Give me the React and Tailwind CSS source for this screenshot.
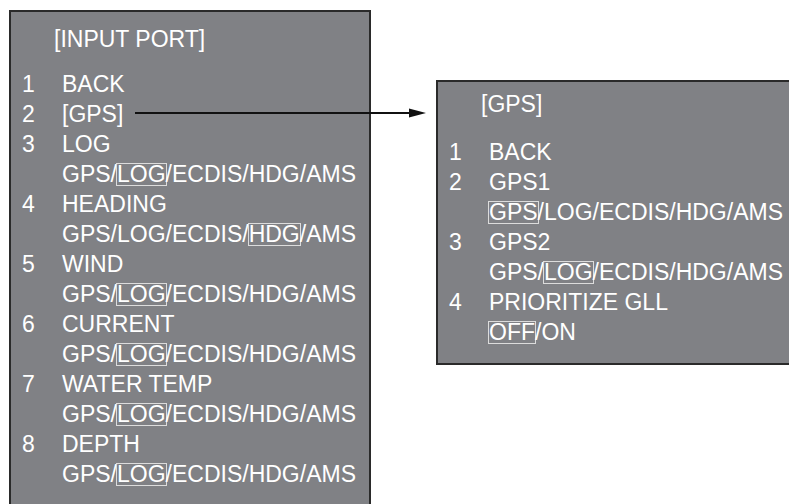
import React from "react";

const font = { fontFamily: '"Liberation Sans", Arial, sans-serif' };

function Sel({ children }) {
  return (
    <span className="inline-block -mx-px border border-[#dcdcdc] leading-[21px]">
      {children}
    </span>
  );
}

function Opts({ sel }) {
  const items = ["GPS", "LOG", "ECDIS", "HDG", "AMS"];
  return (
    <span>
      {items.map((it, i) => (
        <React.Fragment key={it}>
          {i > 0 && "/"}
          {it === sel ? <Sel>{it}</Sel> : it}
        </React.Fragment>
      ))}
    </span>
  );
}

function Row({ n, children }) {
  return (
    <div className="flex h-[30px] items-center whitespace-nowrap leading-[30px]">
      <span className="w-[40px] shrink-0">{n}</span>
      <span>{children}</span>
    </div>
  );
}

export default function App() {
  return (
    <div
      className="relative h-[504px] w-[789px] overflow-hidden bg-white text-[23px] text-white"
      style={font}
    >
      <div className="flex items-start">
        {/* Left panel */}
        <div className="ml-[9px] mt-[10px] h-[520px] w-[362px] shrink-0 border-2 border-[#2a2a2a] bg-[#808185] pl-[11px] pt-[12px]">
          <div className="h-[30px] pl-[32px] leading-[30px]">[INPUT PORT]</div>
          <div className="mt-[15px]">
            <Row n="1">BACK</Row>
            <Row n="2">[GPS]</Row>
            <Row n="3">LOG</Row>
            <Row n=""><Opts sel="LOG" /></Row>
            <Row n="4">HEADING</Row>
            <Row n=""><Opts sel="HDG" /></Row>
            <Row n="5">WIND</Row>
            <Row n=""><Opts sel="LOG" /></Row>
            <Row n="6">CURRENT</Row>
            <Row n=""><Opts sel="LOG" /></Row>
            <Row n="7">WATER TEMP</Row>
            <Row n=""><Opts sel="LOG" /></Row>
            <Row n="8">DEPTH</Row>
            <Row n=""><Opts sel="LOG" /></Row>
          </div>
        </div>

        {/* Right panel */}
        <div className="ml-[65px] mt-[80px] w-[400px] shrink-0 border-2 border-[#2a2a2a] bg-[#808185] pb-[16px] pl-[11px] pt-[7px]">
          <div className="h-[30px] pl-[32px] leading-[30px]">[GPS]</div>
          <div className="mt-[18px]">
            <Row n="1">BACK</Row>
            <Row n="2">GPS1</Row>
            <Row n=""><Opts sel="GPS" /></Row>
            <Row n="3">GPS2</Row>
            <Row n=""><Opts sel="LOG" /></Row>
            <Row n="4">PRIORITIZE GLL</Row>
            <Row n="">
              <Sel>OFF</Sel>/ON
            </Row>
          </div>
        </div>
      </div>

      {/* Arrow */}
      <svg
        className="pointer-events-none absolute left-0 top-0"
        width="789"
        height="504"
        viewBox="0 0 789 504"
      >
        <line x1="135" y1="113" x2="412" y2="113" stroke="#111" strokeWidth="2" />
        <polygon points="409,108.5 426,113 409,117.5" fill="#111" />
      </svg>
    </div>
  );
}
